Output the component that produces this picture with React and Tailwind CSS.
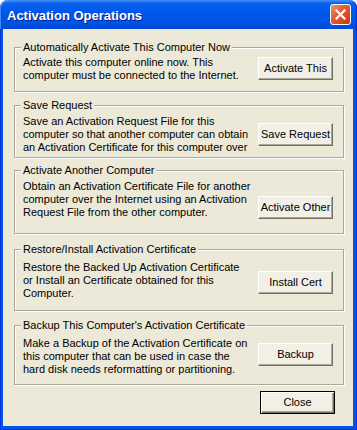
import React from "react";

const groups = [
  {
    title: "Automatically Activate This Computer Now",
    lines: ["Activate this computer online now. This", "computer must be connected to the Internet."],
    button: "Activate This",
    box: "h-[45px] mt-0",
    text: "pt-[8px]",
    btn: "mt-[9px]",
  },
  {
    title: "Save Request",
    lines: [
      "Save an Activation Request File for this",
      "computer so that another computer can obtain",
      "an Activation Certificate for this computer over",
    ],
    button: "Save Request",
    box: "h-[53px] mt-[13px]",
    text: "pt-[9px]",
    btn: "mt-[17px]",
  },
  {
    title: "Activate Another Computer",
    lines: [
      "Obtain an Activation Certificate File for another",
      "computer over the Internet using an Activation",
      "Request File from the other computer.",
    ],
    button: "Activate Other",
    box: "h-[64px] mt-[12px]",
    text: "pt-[9px]",
    btn: "mt-[25px]",
  },
  {
    title: "Restore/Install Activation Certificate",
    lines: [
      "Restore the Backed Up Activation Certificate",
      "or Install an Certificate obtained for this",
      "Computer.",
    ],
    button: "Install Cert",
    box: "h-[62px] mt-[15px]",
    text: "pt-[11px]",
    btn: "mt-[21px]",
  },
  {
    title: "Backup This Computer's Activation Certificate",
    lines: [
      "Make a Backup of the Activation Certificate on",
      "this computer that can be used in case the",
      "hard disk needs reformatting or partitioning.",
    ],
    button: "Backup",
    box: "h-[60px] mt-[14px]",
    text: "pt-[11px]",
    btn: "mt-[17px]",
  },
];

function GroupBox({ g }) {
  return (
    <div className={`relative flex-none border border-[#aca899] shadow-[inset_1px_1px_0_#fff,1px_1px_0_#fff] ${g.box}`}>
      <span className="absolute left-[6px] top-[-8px] px-[2px] bg-[#ece9d8] text-[11px] leading-[14px] whitespace-nowrap">
        {g.title}
      </span>
      <div className="flex pl-[8px]">
        <div className={`w-[235px] text-[11px] leading-[13px] ${g.text}`}>
          {g.lines.map((l, i) => (
            <div key={i} className="whitespace-nowrap">{l}</div>
          ))}
        </div>
        <button
          className={`w-[75px] h-[23px] flex-none flex items-center justify-center bg-[#f1efe6] border border-t-white border-l-white border-r-[#716f64] border-b-[#716f64] shadow-[inset_-1px_-1px_0_#aca899] text-[11px] leading-none text-black ${g.btn}`}
        >
          {g.button}
        </button>
      </div>
    </div>
  );
}

export default function App() {
  return (
    <div className="w-[357px] h-[430px] flex flex-col font-['Liberation_Sans',Arial,sans-serif] text-black">
      {/* title bar */}
      <div className="h-[29px] flex-none flex items-center pl-[7px] pr-[6px] rounded-t-[8px] bg-[linear-gradient(180deg,#4a98ff_0px,#0a62ee_3px,#0058ee_10px,#0054e6_22px,#0049d6_29px)] shadow-[inset_1px_1px_0_#3d8cf5,inset_-1px_0_0_#0831d9]">
        <span className="mt-[3px] text-[13px] font-bold text-white [text-shadow:1px_1px_0_#0a1e8c] whitespace-nowrap">
          Activation Operations
        </span>
        <div className="ml-auto w-[21px] h-[21px] rounded-[3px] border border-white bg-[linear-gradient(135deg,#ec9378_0%,#df5a34_45%,#c7380f_100%)] flex items-center justify-center">
          <svg width="11" height="11" viewBox="0 0 11 11">
            <path d="M1.5 1.5 L9.5 9.5 M9.5 1.5 L1.5 9.5" stroke="#fff" strokeWidth="2.2" strokeLinecap="square" />
          </svg>
        </div>
      </div>
      {/* frame + client */}
      <div className="flex-1 flex flex-col bg-[#0055e5] pl-[3px] pr-[4px] pb-[4px] shadow-[inset_1px_0_0_#0831d9,inset_-1px_0_0_#0831d9,inset_0_-1px_0_#0831d9]">
        <div className="flex-1 flex flex-col bg-[#ece9d8] pl-[11px] pr-[9px] pt-[18px]">
          {groups.map((g, i) => (
            <GroupBox key={i} g={g} />
          ))}
          <button className="mt-[6px] ml-[246px] w-[75px] h-[23px] flex-none flex items-center justify-center bg-[#f1efe6] border border-black shadow-[inset_1px_1px_0_#fff,inset_-1px_-1px_0_#716f64,inset_-2px_-2px_0_#aca899] text-[11px] leading-none text-black">
            Close
          </button>
        </div>
      </div>
    </div>
  );
}
